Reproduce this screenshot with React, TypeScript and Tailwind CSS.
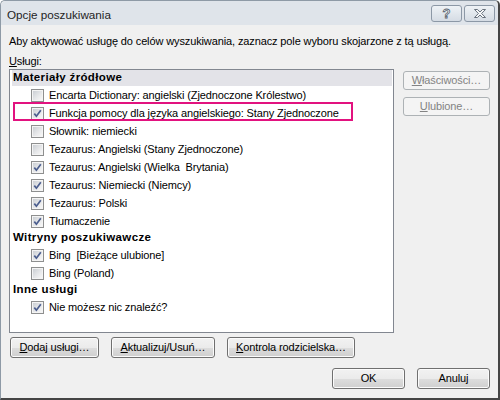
import React from "react";

const font = "font-['Liberation_Sans',Arial,sans-serif]";

function Cb({ checked }: { checked?: boolean }) {
  return (
    <span className="w-[13px] h-[13px] shrink-0 border border-[#8e8f8f] bg-[#f4f4f4] p-[1px] flex">
      <span className="flex-1 flex items-center justify-center bg-[linear-gradient(135deg,#cbcfd4_0%,#e6e7e9_55%,#f7f7f7_100%)]">
        {checked && (
          <svg width="9" height="9" viewBox="0 0 9 9">
            <path d="M1.3 4.6 L3.4 7.2 L7.8 1.2" fill="none" stroke="#4b5e8e" strokeWidth="1.7" />
          </svg>
        )}
      </span>
    </span>
  );
}

function Item({ checked, children, hl }: { checked?: boolean; children: React.ReactNode; hl?: boolean }) {
  return (
    <div className="relative h-[18px] flex items-center pl-[21px] gap-[5px] whitespace-nowrap">
      <Cb checked={checked} />
      <span>{children}</span>
      {hl && <div className="absolute left-[3px] top-[-2px] w-[340px] h-[19px] border-2 border-[#e2127f]" />}
    </div>
  );
}

function Header({ children, sel }: { children: React.ReactNode; sel?: boolean }) {
  return (
    <div
      className={`h-[16px] flex items-center ml-[2px] mr-[1px] pl-[1px] font-bold text-[11.5px] tracking-[0.35px] ${sel ? "bg-[#e3e3e8]" : ""}`}
    >
      {children}
    </div>
  );
}

function Btn({ children, w, h = "h-[21px]" }: { children: React.ReactNode; w: string; h?: string }) {
  return (
    <div
      className={`${w} ${h} rounded-[3px] border border-[#707070] shadow-[inset_0_0_0_1px_#fbfbfb] bg-[linear-gradient(to_bottom,#f2f2f2_0%,#ebebeb_50%,#dddddd_51%,#cfcfcf_100%)] flex items-center justify-center text-black`}
    >
      {children}
    </div>
  );
}

function DBtn({ children }: { children: React.ReactNode }) {
  return (
    <div className="w-[87px] h-[19px] rounded-[3px] border border-[#adb2b5] bg-[#f4f4f4] flex items-center justify-center text-[#838383]">
      {children}
    </div>
  );
}

export default function App() {
  return (
    <div className={`w-[500px] h-[400px] overflow-hidden ${font} text-[11px] tracking-[-0.12px] text-black`}>
      <div className="w-full h-full flex flex-col bg-[#f0f0f0] border-l border-t border-[#8e9aa6] border-r-2 border-b-2 border-r-[#454545] border-b-[#454545] rounded-t-[5px]">
        <div className="h-[24px] shrink-0 flex items-start bg-[#dfe4ea] rounded-t-[5px]">
          <span className="pl-[6px] pt-[5px] text-[11.7px] tracking-normal text-[#1e1e1e]">Opcje poszukiwania</span>
          <div className="ml-auto flex gap-[2px] pr-[3px] pt-[4px]">
            <div className="w-[31px] h-[17px] rounded-[3px] border border-[#8c98a6] bg-[linear-gradient(to_bottom,#eef2f6,#d5dce4)] flex items-center justify-center">
              <span className="text-[13px] font-bold text-[#f4f6f8] [-webkit-text-stroke:0.8px_#5a6470] leading-none">?</span>
            </div>
            <div className="w-[31px] h-[17px] rounded-[3px] border border-[#8c98a6] bg-[linear-gradient(to_bottom,#eef2f6,#d5dce4)] flex items-center justify-center">
              <svg width="14" height="11" viewBox="0 0 14 11">
                <path
                  d="M1.5 1.5 L4.5 1.5 L7 4 L9.5 1.5 L12.5 1.5 L8.6 5.5 L12.5 9.5 L9.5 9.5 L7 7 L4.5 9.5 L1.5 9.5 L5.4 5.5 Z"
                  fill="#f6f7f9"
                  stroke="#5a6470"
                  strokeWidth="0.9"
                  strokeLinejoin="round"
                />
              </svg>
            </div>
          </div>
        </div>

        <div className="flex-1 flex flex-col px-[8px]">
          <div className="mt-[9px] leading-[15px] whitespace-nowrap">
            Aby aktywować usługę do celów wyszukiwania, zaznacz pole wyboru skojarzone z tą usługą.
          </div>
          <div className="mt-[5px] leading-[15px]">
            <span className="underline">U</span>sługi:
          </div>
          <div className="flex">
            <div className="w-[385px] h-[264px] border border-[#828790] bg-white flex flex-col">
              <Header sel>Materiały źródłowe</Header>
              <Item>Encarta Dictionary: angielski (Zjednoczone Królestwo)</Item>
              <Item checked hl>
                Funkcja pomocy dla języka angielskiego: Stany Zjednoczone
              </Item>
              <Item>Słownik: niemiecki</Item>
              <Item>Tezaurus: Angielski (Stany Zjednoczone)</Item>
              <Item checked>Tezaurus: Angielski (Wielka&nbsp; Brytania)</Item>
              <Item checked>Tezaurus: Niemiecki (Niemcy)</Item>
              <Item checked>Tezaurus: Polski</Item>
              <Item checked>Tłumaczenie</Item>
              <Header>Witryny poszukiwawcze</Header>
              <Item checked>Bing&nbsp; [Bieżące ulubione]</Item>
              <Item>Bing (Poland)</Item>
              <Header>Inne usługi</Header>
              <Item checked>Nie możesz nic znaleźć?</Item>
            </div>
            <div className="ml-[9px] mt-[2px] flex flex-col gap-[7px]">
              <DBtn>
                <span className="underline">W</span>łaściwości…
              </DBtn>
              <DBtn>
                <span className="underline">U</span>lubione…
              </DBtn>
            </div>
          </div>
          <div className="mt-[4px] ml-[1px] flex gap-[12px]">
            <Btn w="w-[89px]">
              <span className="underline">D</span>odaj usługi…
            </Btn>
            <Btn w="w-[104px]">
              <span className="underline">A</span>ktualizuj/Usuń…
            </Btn>
            <Btn w="w-[128px]">
              <span className="underline">K</span>ontrola rodzicielska…
            </Btn>
          </div>
          <div className="mt-[10px] flex justify-end gap-[12px]">
            <Btn w="w-[73px]">OK</Btn>
            <Btn w="w-[73px]">Anuluj</Btn>
          </div>
        </div>
      </div>
    </div>
  );
}
